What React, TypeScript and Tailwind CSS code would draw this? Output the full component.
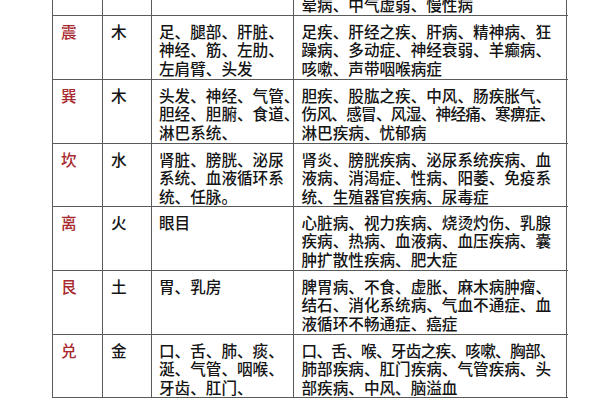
import React from "react";

type Row = {
  name: string;
  el: string;
  organs: string[];
  diseases: string[];
  h: string;
};

const rows: Row[] = [
  {
    name: "震",
    el: "木",
    organs: ["足、腿部、肝脏、", "神经、筋、左肋、", "左肩臂、头发"],
    diseases: ["足疾、肝经之疾、肝病、精神病、狂", "躁病、多动症、神经衰弱、羊癫病、", "咳嗽、声带咽喉病症"],
    h: "h-[64px]",
  },
  {
    name: "巽",
    el: "木",
    organs: ["头发、神经、气管、", "胆经、胆腑、食道、", "淋巴系统、"],
    diseases: ["胆疾、股肱之疾、中风、肠疾胀气、", "伤风、感冒、风湿、神经痛、寒痹症、", "淋巴疾病、忧郁病"],
    h: "h-[64px]",
  },
  {
    name: "坎",
    el: "水",
    organs: ["肾脏、膀胱、泌尿", "系统、血液循环系", "统、任脉。"],
    diseases: ["肾炎、膀胱疾病、泌尿系统疾病、血", "液病、消渴症、性病、阳萎、免疫系", "统、生殖器官疾病、尿毒症"],
    h: "h-[63px]",
  },
  {
    name: "离",
    el: "火",
    organs: ["眼目"],
    diseases: ["心脏病、视力疾病、烧烫灼伤、乳腺", "疾病、热病、血液病、血压疾病、囊", "肿扩散性疾病、肥大症"],
    h: "h-[64px]",
  },
  {
    name: "艮",
    el: "土",
    organs: ["胃、乳房"],
    diseases: ["脾胃病、不食、虚胀、麻木病肿瘤、", "结石、消化系统病、气血不通症、血", "液循环不畅通症、癌症"],
    h: "h-[64px]",
  },
  {
    name: "兑",
    el: "金",
    organs: ["口、舌、肺、痰、", "涎、气管、咽喉、", "牙齿、肛门、"],
    diseases: ["口、舌、喉、牙齿之疾、咳嗽、胸部、", "肺部疾病、肛门疾病、气管疾病、头", "部疾病、中风、脑溢血"],
    h: "h-[63px]",
  },
];

function Lines({ lines }: { lines: string[] }) {
  return (
    <>
      {lines.map((l, i) => {
        const n = Array.from(l).length;
        const cls = n >= 17 ? "tracking-[-0.7px]" : "";
        return (
          <div key={i} className={`whitespace-nowrap ${cls}`}>
            {l}
          </div>
        );
      })}
    </>
  );
}

export default function App() {
  return (
    <div
      className="w-[600px] h-[400px] overflow-hidden bg-white text-[#141414] font-medium text-[15.6px] leading-[18.4px]"
      style={{ fontFamily: '"Noto Sans CJK SC", "Noto Sans", sans-serif' }}
    >
      <div className="ml-[52px] w-[516px] border-l-[1.5px] border-[#5a5a5a] flex flex-col">
        <div className="flex h-[16px] border-b-[1.5px] border-[#5a5a5a] overflow-hidden">
          <div className="w-[50px] border-r-[1.5px] border-[#5a5a5a]" />
          <div className="w-[49px] border-r-[1.5px] border-[#5a5a5a]" />
          <div className="w-[142px] border-r-[1.5px] border-[#5a5a5a]" />
          <div className="w-[273px] border-r-[1.5px] border-[#5a5a5a] flex flex-col justify-end pb-[2px] pl-[7.5px]">
            <div className="whitespace-nowrap">晕病、中气虚弱、慢性病</div>
          </div>
        </div>
        {rows.map((r) => (
          <div key={r.name} className={`flex ${r.h} border-b-[1.5px] border-[#5a5a5a]`}>
            <div className="w-[50px] border-r-[1.5px] border-[#5a5a5a] pt-[6px] pl-[8px] text-[#a82a30]">
              {r.name}
            </div>
            <div className="w-[49px] border-r-[1.5px] border-[#5a5a5a] pt-[6px] pl-[8px]">{r.el}</div>
            <div className="w-[142px] border-r-[1.5px] border-[#5a5a5a] pt-[6px] pl-[7px]">
              <Lines lines={r.organs} />
            </div>
            <div className="w-[273px] border-r-[1.5px] border-[#5a5a5a] pt-[6px] pl-[7.5px]">
              <Lines lines={r.diseases} />
            </div>
          </div>
        ))}
      </div>
    </div>
  );
}
